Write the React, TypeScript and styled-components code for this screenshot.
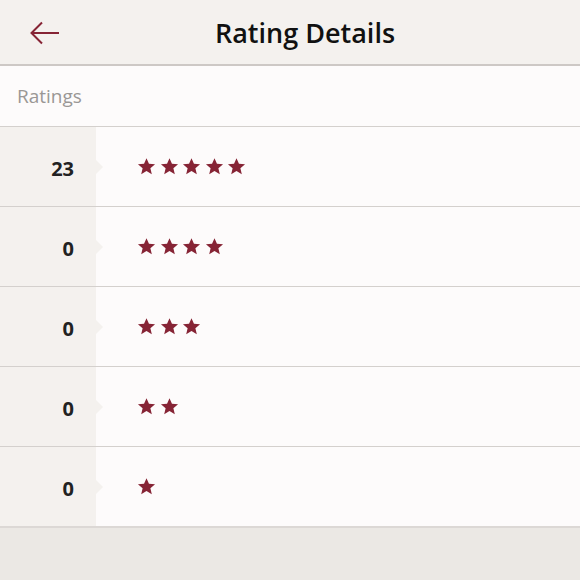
import React from "react";
import styled, { createGlobalStyle } from "styled-components";

const Global = createGlobalStyle`
  html, body { margin: 0; padding: 0; }
  body { background: #ebe8e4; font-family: "Open Sans", "Noto Sans", sans-serif; }
`;

const Page = styled.div`
  width: 580px;
  height: 580px;
  display: flex;
  flex-direction: column;
  background: #ebe8e4;
`;

const Header = styled.header`
  height: 64px;
  display: flex;
  align-items: center;
  position: relative;
  background: #f4f1ee;
  border-bottom: 2px solid #cdc8c5;
`;

const BackButton = styled.button`
  position: absolute;
  left: 28px;
  top: 18px;
  width: 34px;
  height: 30px;
  padding: 0;
  border: none;
  background: none;
  display: flex;
  align-items: center;
  justify-content: center;
`;

const Title = styled.h1`
  flex: 1;
  margin: 0;
  padding-left: 30px;
  text-align: center;
  font-size: 27px;
  font-weight: 600;
  color: #111;
`;

const SectionHead = styled.div`
  height: 60px;
  display: flex;
  align-items: center;
  padding-left: 17px;
  background: #fdfbfb;
  border-bottom: 1px solid #d4d0cd;
  font-size: 19px;
  color: #9a9795;
`;

const List = styled.div`
  display: flex;
  flex-direction: column;
  background: #fdfbfb;
  border-bottom: 2px solid #dcd8d5;
`;

const Row = styled.div<{ $last?: boolean }>`
  height: 79px;
  display: flex;
  border-bottom: ${(p) => (p.$last ? "none" : "1px solid #d4d0cd")};
`;

const Count = styled.div`
  width: 96px;
  box-sizing: border-box;
  padding-right: 22px;
  padding-top: 4px;
  background: #f4f1ee;
  display: flex;
  align-items: center;
  justify-content: flex-end;
  font-size: 20px;
  font-weight: 700;
  color: #222;
  position: relative;
  &::after {
    content: "";
    position: absolute;
    right: -7px;
    top: 50%;
    margin-top: -7px;
    border-top: 7px solid transparent;
    border-bottom: 7px solid transparent;
    border-left: 7px solid #f4f1ee;
  }
`;

const Stars = styled.div`
  display: flex;
  align-items: center;
  gap: 3.5px;
  padding-left: 41px;
`;

const Star = () => (
  <svg width="19" height="19" viewBox="0 0 24 24">
    <path
      d="M12 1.5l3.1 7.1 7.7.6-5.9 5 1.8 7.5L12 17.7l-6.7 4 1.8-7.5-5.9-5 7.7-.6z"
      fill="#862435"
    />
  </svg>
);

const rows = [
  { stars: 5, count: 23 },
  { stars: 4, count: 0 },
  { stars: 3, count: 0 },
  { stars: 2, count: 0 },
  { stars: 1, count: 0 },
];

export default function App() {
  return (
    <>
      <Global />
      <Page>
        <Header>
          <BackButton aria-label="Back">
            <svg width="32" height="24" viewBox="0 0 32 24" fill="none">
              <path d="M2 12h28M13 1.5L2.5 12 13 22.5" stroke="#862435" strokeWidth="2" />
            </svg>
          </BackButton>
          <Title>Rating Details</Title>
        </Header>
        <SectionHead>Ratings</SectionHead>
        <List>
          {rows.map((r, i) => (
            <Row key={r.stars} $last={i === rows.length - 1}>
              <Count>{r.count}</Count>
              <Stars>
                {Array.from({ length: r.stars }).map((_, j) => (
                  <Star key={j} />
                ))}
              </Stars>
            </Row>
          ))}
        </List>
      </Page>
    </>
  );
}
